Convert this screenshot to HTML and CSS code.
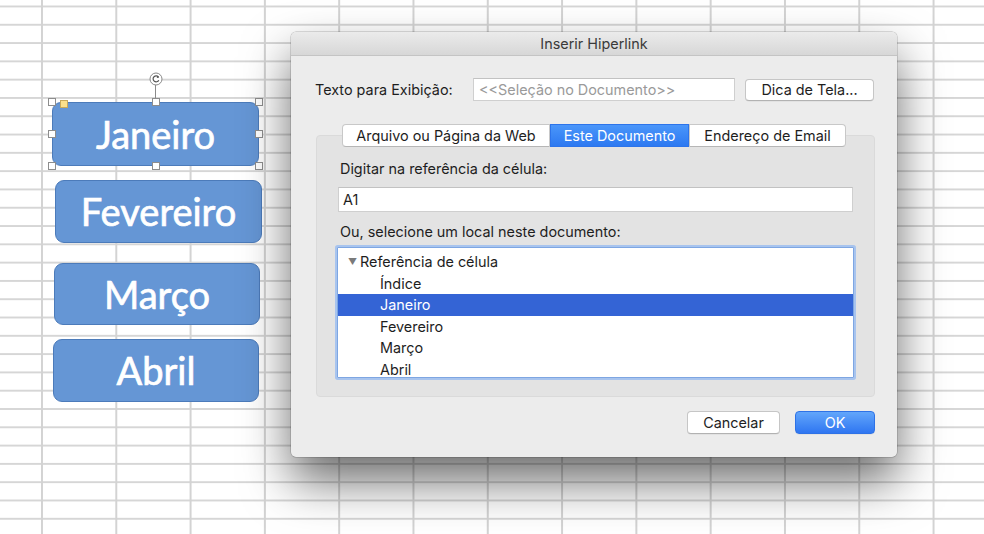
FILE: index.html
```html
<!DOCTYPE html>
<html lang="pt">
<head>
<meta charset="utf-8">
<title>Inserir Hiperlink</title>
<link rel="stylesheet" href="styles.css">
</head>
<body>
<div class="sheet">
  <div class="shape shape-jan selected">
    <span class="shape-text">Janeiro</span>
    <span class="rot-line"></span>
    <svg class="rot-handle" width="14" height="14" viewBox="0 0 14 14">
      <circle cx="7" cy="7" r="6" fill="#fff" stroke="#8a8a8a" stroke-width="1"/>
      <path d="M9.6 5.2 A3 3 0 1 0 9.8 8.2" fill="none" stroke="#555" stroke-width="1.2"/>
      <path d="M8.2 3.6 L10.2 5.4 L7.8 5.9 Z" fill="#555"/>
    </svg>
    <span class="handle h-tl"></span>
    <span class="handle h-tc"></span>
    <span class="handle h-tr"></span>
    <span class="handle h-ml"></span>
    <span class="handle h-mr"></span>
    <span class="handle h-bl"></span>
    <span class="handle h-bc"></span>
    <span class="handle h-br"></span>
    <span class="adj-handle"></span>
  </div>
  <div class="shape shape-fev"><span class="shape-text">Fevereiro</span></div>
  <div class="shape shape-mar"><span class="shape-text">Março</span></div>
  <div class="shape shape-abr"><span class="shape-text">Abril</span></div>

  <div class="dialog">
    <div class="titlebar">Inserir Hiperlink</div>
    <div class="dialog-body">
      <div class="row-display">
        <label class="lbl-display">Texto para Exibição:</label>
        <div class="field field-display placeholder">&lt;&lt;Seleção no Documento&gt;&gt;</div>
        <button class="btn btn-tip">Dica de Tela...</button>
      </div>

      <div class="tabs">
        <div class="tab">Arquivo ou Página da Web</div>
        <div class="tab active">Este Documento</div>
        <div class="tab">Endereço de Email</div>
      </div>

      <div class="panel">
        <div class="panel-label">Digitar na referência da célula:</div>
        <div class="field field-ref">A1</div>
        <div class="panel-label second">Ou, selecione um local neste documento:</div>
        <div class="listbox">
          <div class="list-row header"><span class="tri">▼</span>Referência de célula</div>
          <div class="list-row item">Índice</div>
          <div class="list-row item sel">Janeiro</div>
          <div class="list-row item">Fevereiro</div>
          <div class="list-row item">Março</div>
          <div class="list-row item">Abril</div>
        </div>
      </div>

      <div class="actions">
        <button class="btn btn-cancel">Cancelar</button>
        <button class="btn btn-ok">OK</button>
      </div>
    </div>
  </div>
</div>
</body>
</html>
```
FILE: styles.css
```css
html, body {
  margin: 0;
  padding: 0;
}
body {
  width: 984px;
  height: 534px;
  overflow: hidden;
  background-color: #ffffff;
  background-image:
    linear-gradient(to right, #d3d3d3 0, #d3d3d3 1.5px, transparent 1.5px),
    linear-gradient(to bottom, #d6d6d6 0, #d6d6d6 1.5px, transparent 1.5px);
  background-size: 74.3px 100%, 100% 18.3px;
  background-position: 41px 0, 0 5.5px;
  font-family: "Inter", "Liberation Sans", sans-serif;
}
.sheet {
  position: relative;
  width: 984px;
  height: 534px;
}

/* spreadsheet shapes (free canvas) */
.shape {
  position: absolute;
  box-sizing: border-box;
  background: #6596d5;
  border: 1.5px solid #4c7bba;
  border-radius: 9px;
  display: flex;
  align-items: center;
  justify-content: center;
}
.shape-text {
  font-family: "Lato", "Open Sans", sans-serif;
  font-size: 38px;
  color: #ffffff;
  line-height: 1;
  padding-bottom: 1px;
  -webkit-text-stroke: 0.7px #ffffff;
}
.shape-jan { left: 52px; top: 102px; width: 207px; height: 64px; }
.shape-fev { left: 55px; top: 180px; width: 207px; height: 63px; }
.shape-mar { left: 54px; top: 263px; width: 206px; height: 62px; }
.shape-abr { left: 53px; top: 339px; width: 206px; height: 63px; }

.handle {
  position: absolute;
  width: 8px;
  height: 8px;
  box-sizing: border-box;
  background: #fff;
  border: 1px solid #8d8d8d;
}
.h-tl { left: -5px; top: -5px; }
.h-tc { left: calc(50% - 4px); top: -5px; }
.h-tr { right: -5px; top: -5px; }
.h-ml { left: -5px; top: calc(50% - 4px); }
.h-mr { right: -5px; top: calc(50% - 4px); }
.h-bl { left: -5px; bottom: -5px; }
.h-bc { left: calc(50% - 4px); bottom: -5px; }
.h-br { right: -5px; bottom: -5px; }
.adj-handle {
  position: absolute;
  left: 7px;
  top: -3px;
  width: 8px;
  height: 8px;
  box-sizing: border-box;
  background: #fbe08c;
  border: 1px solid #c9a95a;
}
.rot-line {
  position: absolute;
  left: calc(50% - 0.5px);
  top: -18px;
  width: 1px;
  height: 14px;
  background: #8a8a8a;
}
.rot-handle {
  position: absolute;
  left: calc(50% - 7px);
  top: -31px;
}

/* dialog window */
.dialog {
  position: absolute;
  left: 291px;
  top: 32px;
  width: 606px;
  height: 425px;
  box-sizing: border-box;
  background: #ececec;
  border-radius: 5px;
  box-shadow: 0 0 0 0.5px rgba(0,0,0,0.25), 0 24px 48px rgba(0,0,0,0.58);
  overflow: hidden;
  color: #1e1e1e;
  font-size: 14.4px;
}
.titlebar {
  height: 24px;
  box-sizing: border-box;
  background: linear-gradient(#ebebeb, #d7d7d7);
  border-bottom: 1px solid #c4c4c4;
  text-align: center;
  line-height: 23px;
  font-size: 14.4px;
  color: #3a3a3a;
}
.dialog-body {
  padding: 22px 22px 23px 24px;
}
.row-display {
  display: flex;
  align-items: center;
  height: 23px;
}
.lbl-display {
  width: 158px;
}
.field {
  box-sizing: border-box;
  background: #fff;
  border: 1px solid #cfcfcf;
  border-top-color: #c2c2c2;
  padding: 0 5px;
  display: flex;
  align-items: center;
}
.field-display {
  width: 262px;
  height: 23px;
}
.placeholder {
  color: #9a9a9a;
}
.btn {
  box-sizing: border-box;
  font-family: inherit;
  font-size: 14.4px;
  color: #1e1e1e;
  background: #fff;
  border: 1px solid #c6c6c6;
  border-bottom-color: #b2b2b2;
  border-radius: 4px;
  padding: 0;
  height: 22px;
  box-shadow: 0 0.5px 0.5px rgba(0,0,0,0.08);
}
.btn-tip {
  margin-left: 10px;
  width: 129px;
}

.tabs {
  display: flex;
  justify-content: center;
  margin-top: 23px;
  margin-left: -2px;
  position: relative;
  z-index: 1;
  height: 23px;
}
.tab {
  box-sizing: border-box;
  height: 23px;
  line-height: 21px;
  background: #fff;
  border: 1px solid #c8c8c8;
  border-bottom-color: #b6b6b6;
  padding: 0 13px;
  color: #1e1e1e;
}
.tab:first-child {
  border-radius: 4px 0 0 4px;
  width: 208px;
  text-align: center;
  padding: 0;
}
.tab:last-child {
  border-radius: 0 4px 4px 0;
  width: 157px;
  text-align: center;
  padding: 0;
}
.tab.active {
  background: linear-gradient(#4a96fa, #2d79f1);
  border-color: #2d74ea;
  color: #fff;
  width: 139px;
  text-align: center;
  padding: 0;
}

.panel {
  box-sizing: border-box;
  margin-top: -12px;
  margin-left: 1px;
  width: 559px;
  height: 262px;
  background: #e3e3e3;
  border: 1px solid #dadada;
  border-radius: 4px;
  padding: 25px 22px 0 21px;
}
.panel-label {
  height: 16px;
  line-height: 16px;
  margin-left: 2px;
}
.field-ref {
  margin-top: 10px;
  height: 25px;
  width: 515px;
  padding-left: 4px;
}
.panel-label.second {
  margin-top: 12px;
}
.listbox {
  margin-top: 7px;
  margin-left: -1px;
  width: 517px;
  height: 131px;
  box-sizing: border-box;
  background: #fff;
  border: 1px solid #7ea6e2;
  box-shadow: 0 0 0 2px #a8c4ee;
  border-radius: 1px;
  overflow: hidden;
  padding-top: 3px;
}
.list-row {
  height: 21.6px;
  line-height: 21.6px;
  white-space: nowrap;
}
.list-row.header {
  padding-left: 10px;
}
.tri {
  font-size: 9px;
  color: #7a7a7a;
  display: inline-block;
  width: 12px;
  vertical-align: 2px;
}
.list-row.item {
  padding-left: 42px;
}
.list-row.sel {
  background: #3464d5;
  color: #fff;
}

.actions {
  display: flex;
  justify-content: flex-end;
  margin-top: 14px;
  gap: 15px;
}
.btn-cancel {
  width: 93px;
  height: 23px;
}
.btn-ok {
  width: 80px;
  height: 23px;
  background: linear-gradient(#62a6fb, #2f76f1);
  border: 1px solid #2e72e6;
  color: #fff;
}
```
